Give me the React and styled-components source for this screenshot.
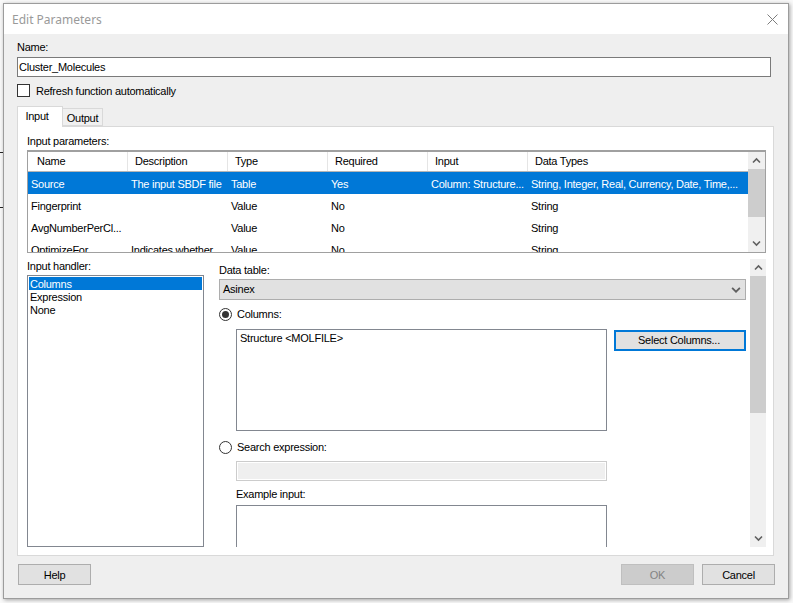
import React from 'react';
import styled, { createGlobalStyle } from 'styled-components';

const GlobalStyle = createGlobalStyle`
  * {
    box-sizing: border-box;
  }
  html, body {
    margin: 0;
    padding: 0;
    background: #f9f9f9;
  }
  body {
    font-family: 'Liberation Sans', Arial, sans-serif;
    font-size: 11px;
    line-height: 13px;
    letter-spacing: -0.25px;
    color: #000;
  }
`;

const Screen = styled.div`
  position: relative;
  width: 793px;
  height: 603px;
  overflow: hidden;
  padding: 3px 0 0 3px;
`;
const BackdropTick = styled.div`
  position: absolute;
  left: 0;
  top: ${({ top }) => top}px;
  width: 3px;
  height: 1px;
  background: #222;
`;
const Window = styled.div`
  width: 786px;
  height: 596px;
  background: #efefef;
  border: 1px solid #9c9c9c;
  box-shadow: 1px 1px 4px rgba(0, 0, 0, 0.35);
`;
const TitleBar = styled.div`
  height: 30px;
  background: #fff;
  display: flex;
  align-items: center;
  justify-content: space-between;
  padding: 0 10px 0 8px;
`;
const Title = styled.div`
  font-family: 'Noto Sans', sans-serif;
  font-size: 12px;
  letter-spacing: 0;
  color: #9a9a9a;
`;
const Body = styled.div`
  padding: 7px 0 0 13px;
`;
const NameInput = styled.div`
  width: 754px;
  height: 20px;
  margin-top: 3px;
  background: #fff;
  border: 1px solid #7a7a7a;
  padding: 3px 1px;
`;
const CheckRow = styled.div`
  display: flex;
  align-items: center;
  gap: 6px;
  margin-top: 7px;
  height: 13px;
`;
const CheckLabel = styled.span`
  padding-top: 2px;
`;
const CheckBox = styled.div`
  width: 13px;
  height: 13px;
  background: #fff;
  border: 1px solid #333;
`;
const TabStrip = styled.div`
  display: flex;
  align-items: flex-end;
  height: 20px;
  margin-top: 9px;
`;
const Tab = styled.div`
  height: ${({ active }) => (active ? 21 : 18)}px;
  width: ${({ active }) => (active ? 46 : 40)}px;
  margin-bottom: ${({ active }) => (active ? -1 : 0)}px;
  background: ${({ active }) => (active ? '#fff' : '#f0f0f0')};
  border: 1px solid #d9d9d9;
  border-bottom: ${({ active }) => (active ? 'none' : '1px solid #d9d9d9')};
  border-left: ${({ active }) => (active ? '1px solid #d9d9d9' : 'none')};
  text-align: center;
  padding: 3px ${({ active }) => (active ? 6 : 0)}px 0 0;
  position: relative;
  z-index: ${({ active }) => (active ? 1 : 0)};
`;
const TabPanel = styled.div`
  width: 757px;
  height: 430px;
  background: #fff;
  border: 1px solid #d9d9d9;
  padding: 8px 0 0 9px;
`;
const GridBox = styled.div`
  width: 739px;
  height: 103px;
  margin-top: 2px;
  border: 1px solid #a0a0a0;
  border-top-width: 2px;
  display: flex;
`;
const GridMain = styled.div`
  flex: 1;
  min-width: 0;
  height: 100%;
  overflow: hidden;
`;
const HeaderRow = styled.div`
  display: flex;
  height: 20px;
  border-bottom: 1px solid #b5b5b5;
`;
const HeaderCell = styled.div`
  width: ${({ w }) => w}px;
  padding: 3px 0 0 7px;
  border-right: 1px solid #e5e5e5;
  &:first-child {
    padding-left: 9px;
  }
  &:last-child {
    border-right: none;
  }
`;
const DataRow = styled.div`
  display: flex;
  height: 22px;
  padding-top: 2px;
  align-items: center;
  background: ${({ selected }) => (selected ? '#0078d7' : 'transparent')};
  color: ${({ selected }) => (selected ? '#fff' : '#000')};
`;
const DataCell = styled.div`
  width: ${({ w }) => w}px;
  padding-left: 3px;
  white-space: nowrap;
  overflow: hidden;
`;
const ScrollBar = styled.div`
  width: ${({ w }) => w}px;
  flex: none;
  display: flex;
  flex-direction: column;
  background: #f0f0f0;
`;
const ScrollArrow = styled.div`
  height: 17px;
  flex: none;
  display: flex;
  align-items: center;
  justify-content: center;
`;
const ScrollThumb = styled.div`
  height: ${({ h }) => h}px;
  flex: none;
  background: #cdcdcd;
`;
const ScrollFill = styled.div`
  flex: 1;
`;
const LowerArea = styled.div`
  display: flex;
  height: 288px;
  margin-top: 6px;
`;
const HandlerColumn = styled.div`
  width: 177px;
  flex: none;
  padding-top: 1px;
`;
const HandlerList = styled.div`
  height: 272px;
  margin-top: 2px;
  background: #fff;
  border: 1px solid #828790;
  padding: 1px;
`;
const HandlerItem = styled.div`
  height: 13px;
  padding: 1px 0 0 1px;
  background: ${({ selected }) => (selected ? '#0078d7' : 'transparent')};
  color: ${({ selected }) => (selected ? '#fff' : '#000')};
`;
const EditorColumn = styled.div`
  width: 531px;
  flex: none;
  margin-left: 15px;
  overflow: hidden;
  padding-top: 5px;
`;
const ComboBox = styled.div`
  width: 527px;
  height: 21px;
  margin-top: 2px;
  background: #e1e1e1;
  border: 1px solid #adadad;
  display: flex;
  align-items: center;
  justify-content: space-between;
  padding: 0 4px 0 3px;
`;
const RadioRow = styled.div`
  display: flex;
  align-items: center;
  gap: 5px;
  height: 13px;
  margin-top: ${({ mt }) => mt}px;
`;
const RadioDot = styled.div`
  width: 13px;
  height: 13px;
  border-radius: 50%;
  background: #fff;
  border: 1px solid #333;
  display: flex;
  align-items: center;
  justify-content: center;
  &::after {
    content: '';
    display: ${({ checked }) => (checked ? 'block' : 'none')};
    width: 7px;
    height: 7px;
    border-radius: 50%;
    background: #333;
  }
`;
const ColumnsRow = styled.div`
  display: flex;
  align-items: flex-start;
  gap: 7px;
  margin: 8px 0 0 17px;
`;
const ColumnsList = styled.div`
  width: 371px;
  height: 102px;
  border: 1px solid #828790;
  padding: 2px 3px;
`;
const Button = styled.div`
  width: ${({ w }) => w || 73}px;
  height: 21px;
  padding-top: 1px;
  background: ${({ disabled }) => (disabled ? '#ccc' : '#e1e1e1')};
  border: ${({ focused }) => (focused ? '2px solid #0078d7' : '1px solid')};
  border-color: ${({ focused, disabled }) => (focused ? '#0078d7' : disabled ? '#bfbfbf' : '#adadad')};
  color: ${({ disabled }) => (disabled ? '#838383' : '#000')};
  display: flex;
  align-items: center;
  justify-content: center;
`;
const SelectColumnsButton = styled(Button)`
  margin-top: 1px;
  padding: 0 2px 0 0;
`;
const IndentBlock = styled.div`
  margin-left: 17px;
`;
const DisabledInput = styled.div`
  width: 371px;
  height: 20px;
  margin-top: 7px;
  background: #efefef;
  border: 1px solid #ccc;
  box-shadow: inset 0 0 0 1px #fff;
`;
const FieldLabel = styled.div`
  margin-top: ${({ mt }) => mt || 0}px;
`;
const ExampleBox = styled.div`
  width: 371px;
  height: 60px;
  margin-top: 4px;
  border: 1px solid #828790;
`;
const Footer = styled.div`
  width: 757px;
  display: flex;
  align-items: center;
  gap: 8px;
  margin: 8px 0 0 1px;
`;
const Spacer = styled.div`
  flex: 1;
`;

const Chevron = ({ dir = 'down', color = '#606060', size = 9 }) => (
  <svg width={size} height={size} viewBox="0 0 9 9" fill="none">
    <path
      d={dir === 'up' ? 'M1 6.5 L4.5 3 L8 6.5' : 'M1 2.5 L4.5 6 L8 2.5'}
      stroke={color}
      strokeWidth="1.6"
    />
  </svg>
);

const CloseIcon = () => (
  <svg width="11" height="11" viewBox="0 0 11 11" fill="none">
    <path d="M0.5 0.5 L10.5 10.5 M10.5 0.5 L0.5 10.5" stroke="#7d7d7d" strokeWidth="1" />
  </svg>
);

const widths = [100, 100, 100, 100, 100, 220];
const headers = ['Name', 'Description', 'Type', 'Required', 'Input', 'Data Types'];
const rows = [
  ['Source', 'The input SBDF file', 'Table', 'Yes', 'Column: Structure...', 'String, Integer, Real, Currency, Date, Time,...'],
  ['Fingerprint', '', 'Value', 'No', '', 'String'],
  ['AvgNumberPerCl...', '', 'Value', 'No', '', 'String'],
  ['OptimizeFor', 'Indicates whether', 'Value', 'No', '', 'String'],
];

export default function App() {
  return (
    <Screen>
      <GlobalStyle />
      <BackdropTick top={152} />
      <BackdropTick top={207} />
      <Window>
        <TitleBar>
          <Title>Edit Parameters</Title>
          <CloseIcon />
        </TitleBar>
        <Body>
          <div>Name:</div>
          <NameInput>Cluster_Molecules</NameInput>
          <CheckRow>
            <CheckBox />
            <CheckLabel>Refresh function automatically</CheckLabel>
          </CheckRow>
          <TabStrip>
            <Tab active>Input</Tab>
            <Tab>Output</Tab>
          </TabStrip>
          <TabPanel>
            <div>Input parameters:</div>
            <GridBox>
              <GridMain>
                <HeaderRow>
                  {headers.map((h, i) => (
                    <HeaderCell key={h} w={widths[i]}>
                      {h}
                    </HeaderCell>
                  ))}
                </HeaderRow>
                {rows.map((row, r) => (
                  <DataRow key={row[0]} selected={r === 0}>
                    {row.map((cell, i) => (
                      <DataCell key={i} w={widths[i]}>
                        {cell}
                      </DataCell>
                    ))}
                  </DataRow>
                ))}
              </GridMain>
              <ScrollBar w={17}>
                <ScrollArrow>
                  <Chevron dir="up" />
                </ScrollArrow>
                <ScrollThumb h={48} />
                <ScrollFill />
                <ScrollArrow>
                  <Chevron />
                </ScrollArrow>
              </ScrollBar>
            </GridBox>
            <LowerArea>
              <HandlerColumn>
                <div>Input handler:</div>
                <HandlerList>
                  <HandlerItem selected>Columns</HandlerItem>
                  <HandlerItem>Expression</HandlerItem>
                  <HandlerItem>None</HandlerItem>
                </HandlerList>
              </HandlerColumn>
              <EditorColumn>
                <div>Data table:</div>
                <ComboBox>
                  Asinex
                  <Chevron size={10} />
                </ComboBox>
                <RadioRow mt={8}>
                  <RadioDot checked />
                  Columns:
                </RadioRow>
                <ColumnsRow>
                  <ColumnsList>Structure &lt;MOLFILE&gt;</ColumnsList>
                  <SelectColumnsButton w={132} focused>
                    Select Columns...
                  </SelectColumnsButton>
                </ColumnsRow>
                <RadioRow mt={10}>
                  <RadioDot />
                  Search expression:
                </RadioRow>
                <IndentBlock>
                  <DisabledInput />
                  <FieldLabel mt={7}>Example input:</FieldLabel>
                  <ExampleBox />
                </IndentBlock>
              </EditorColumn>
              <ScrollBar w={16}>
                <ScrollArrow>
                  <Chevron dir="up" />
                </ScrollArrow>
                <ScrollThumb h={137} />
                <ScrollFill />
                <ScrollArrow>
                  <Chevron />
                </ScrollArrow>
              </ScrollBar>
            </LowerArea>
          </TabPanel>
          <Footer>
            <Button>Help</Button>
            <Spacer />
            <Button disabled>OK</Button>
            <Button>Cancel</Button>
          </Footer>
        </Body>
      </Window>
    </Screen>
  );
}
